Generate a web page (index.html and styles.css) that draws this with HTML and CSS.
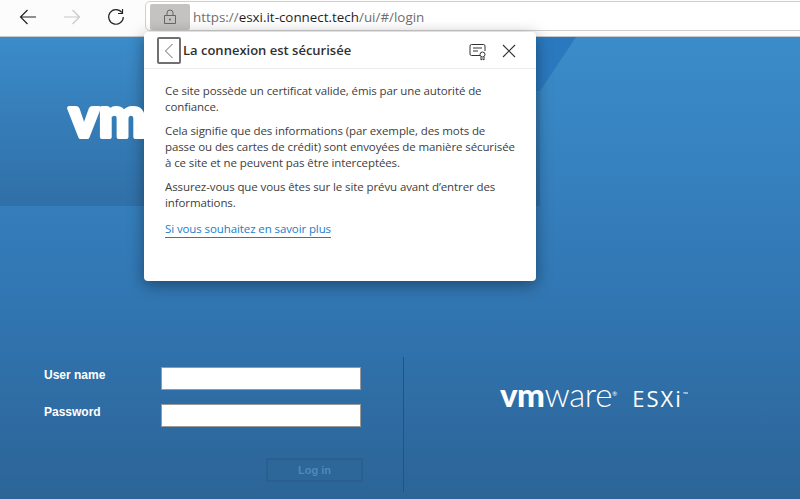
FILE: index.html
```html
<!DOCTYPE html>
<html lang="fr">
<head>
    <meta charset="UTF-8">
    <meta name="viewport" content="width=device-width, initial-scale=1.0">
    <title>VMware ESXi</title>
    <link rel="stylesheet" href="styles.css">
</head>
<body>
    <header class="toolbar">
        <nav class="nav-buttons">
            <svg class="nav-icon" width="20" height="20" viewBox="0 0 20 20"><path d="M18 10H2.500M9.500 3L2.500 10L9.500 17" fill="none" stroke="#222" stroke-width="1.200"/></svg>
            <svg class="nav-icon" width="20" height="20" viewBox="0 0 20 20"><path d="M2 10h15.500M10.500 3l7 7l-7 7" fill="none" stroke="#c8c8c8" stroke-width="1.200"/></svg>
            <svg class="nav-icon" width="20" height="20" viewBox="0 0 20 20"><path d="M15.800 5.500A7.300 7.300 0 1 0 17.300 10M16.500 2v4.500H12" fill="none" stroke="#222" stroke-width="1.200"/></svg>
        </nav>
        <div class="address-bar">
            <button class="lock-button">
                <svg width="14" height="16" viewBox="0 0 14 16"><path d="M1.500 6.500h11v8h-11zM4 6.500V4a3 3 0 0 1 6 0v2.500" fill="none" stroke="#666" stroke-width="1"/><circle cx="7" cy="10.500" r="1" fill="#666"/></svg>
            </button>
            <span class="url"><span class="url-dim">https://</span>esxi.it-connect.tech<span class="url-dim">/ui/#/login</span></span>
        </div>
    </header>

    <main class="login-page">
        <div class="hero">
            <svg class="hero-logo" width="220" height="48" viewBox="0 0 220 48"><text x="4" y="39">vm</text></svg>
        </div>

        <section class="login-row">
            <form class="login-form">
                <div class="field">
                    <label class="field-label">User name</label>
                    <input class="field-input" type="text">
                </div>
                <div class="field">
                    <label class="field-label">Password</label>
                    <input class="field-input" type="password">
                </div>
                <button class="login-button" type="button">Log in</button>
            </form>
            <div class="brand">
                <span class="brand-vm">vm</span><span class="brand-ware">ware</span><span class="brand-reg">®</span>
                <span class="brand-esxi">ESXi</span><span class="brand-tm">™</span>
            </div>
        </section>
    </main>

    <aside class="security-popup">
        <div class="popup-header">
            <button class="popup-back">
                <svg width="12" height="18" viewBox="0 0 12 18"><path d="M9.500 2L2.500 9l7 7" fill="none" stroke="#666" stroke-width="1"/></svg>
            </button>
            <h2 class="popup-title">La connexion est sécurisée</h2>
            <svg class="popup-cert" width="18" height="18" viewBox="0 0 18 18"><path d="M11 12.500H2.500a1.500 1.500 0 0 1-1.500-1.500V3a1.500 1.500 0 0 1 1.500-1.500h12a1.500 1.500 0 0 1 1.500 1.500v5" fill="none" stroke="#333" stroke-width="1"/><path d="M4 5h9M4 8h5" stroke="#333" stroke-width="1"/><circle cx="13.500" cy="11.500" r="2.500" fill="#fff" stroke="#333" stroke-width="1"/><path d="M12 14v3l1.500-1l1.500 1v-3" fill="none" stroke="#333" stroke-width="1"/></svg>
            <svg class="popup-close" width="14" height="14" viewBox="0 0 14 14"><path d="M1 1l12 12M13 1L1 13" stroke="#333" stroke-width="1.100"/></svg>
        </div>
        <div class="popup-body">
            <p>Ce site possède un certificat valide, émis par une autorité de confiance.</p>
            <p>Cela signifie que des informations (par exemple, des mots de passe ou des cartes de crédit) sont envoyées de manière sécurisée à ce site et ne peuvent pas être interceptées.</p>
            <p>Assurez-vous que vous êtes sur le site prévu avant d’entrer des informations.</p>
            <a class="popup-link" href="#">Si vous souhaitez en savoir plus</a>
        </div>
    </aside>
</body>
</html>
```

FILE: styles.css
```css
body {
    font-family: "Open Sans", "Noto Sans", sans-serif;
    margin: 0;
    height: 499px;
    overflow: hidden;
    display: flex;
    flex-direction: column;
    background-color: #2c6497;
}

/* barre du navigateur */
.toolbar {
    height: 36px;
    flex-shrink: 0;
    display: flex;
    background-color: #fcfcfc;
    border-bottom: 1px solid #c9c9c9;
    box-sizing: content-box;
}
.nav-buttons {
    width: 145px;
    padding: 7px 0 0 18px;
    box-sizing: border-box;
    display: flex;
    gap: 24px;
    align-items: flex-start;
}
.address-bar {
    flex-grow: 1;
    height: 30px;
    margin: 1px -6px 0 0;
    padding: 2px 0 0 4px;
    box-sizing: border-box;
    display: flex;
    align-items: flex-start;
    background-color: #fff;
    border: 1px solid #cfcfcf;
    border-radius: 5px;
}
.lock-button {
    width: 40px;
    height: 26px;
    padding: 0;
    border: none;
    background-color: #c4c3c2;
    border-radius: 2px;
    display: flex;
    align-items: center;
    justify-content: center;
}
.url {
    margin-left: 3px;
    font-size: 13.4px;
    line-height: 26px;
    color: #1f1f1f;
}
.url-dim {
    color: #6f6f6f;
}

/* page de login */
.login-page {
    flex-grow: 1;
    position: relative;
    display: flex;
    flex-direction: column;
    justify-content: space-between;
    background: linear-gradient(#3b8cca, #3279b6 50%, #2c6497);
    overflow: hidden;
}
.login-page::before {
    content: "";
    position: absolute;
    top: 0;
    left: 0;
    width: 540px;
    height: 169px;
    background: linear-gradient(rgba(36, 70, 110, 0), rgba(36, 70, 110, 0.26));
}
.login-page::after {
    content: "";
    position: absolute;
    top: 0;
    left: 500px;
    width: 76px;
    height: 54px;
    background-color: #2a79bf;
    clip-path: polygon(0 0, 100% 0, 40px 100%, 0 100%);
}
.hero {
    position: relative;
    z-index: 1;
    padding: 61px 0 0 65px;
}
.hero-logo {
    display: block;
}
.hero-logo text {
    font-family: Lato, sans-serif;
    font-size: 56px;
    font-weight: 900;
    fill: #fff;
    stroke: #fff;
    stroke-width: 4;
    stroke-linejoin: round;
}
.login-row {
    position: relative;
    z-index: 1;
    display: flex;
    height: 135px;
    margin-bottom: 7px;
}
.login-form {
    width: 359px;
    box-sizing: content-box;
    padding: 10px 0 0 44px;
    border-right: 1px solid #1f5488;
    font-family: "Liberation Sans", Arial, sans-serif;
}
.field {
    display: flex;
    margin-bottom: 14px;
}
.field-label {
    width: 117px;
    font-size: 12px;
    font-weight: bold;
    line-height: 16px;
    color: #fff;
}
.field-input {
    width: 200px;
    height: 23px;
    padding: 0;
    box-sizing: border-box;
    border: 1px solid #9a9a9a;
    background-color: #fff;
}
.login-button {
    display: block;
    width: 97px;
    height: 24px;
    margin: 31px 0 0 222px;
    padding: 0;
    border: 2px solid #2a5f90;
    background-color: #2d6698;
    color: #5088ba;
    font-family: inherit;
    font-size: 11px;
    font-weight: bold;
}
.brand {
    margin: 22px 0 0 96px;
    display: flex;
    align-items: baseline;
    height: 30px;
    color: #fff;
    font-family: Lato, sans-serif;
    line-height: 30px;
}
.brand-vm {
    font-size: 33px;
    font-weight: 900;
    letter-spacing: -0.5px;
}
.brand-ware {
    font-size: 33px;
    font-weight: 300;
    letter-spacing: -0.3px;
}
.brand-reg {
    font-size: 6px;
    align-self: flex-start;
}
.brand-esxi {
    margin-left: 15px;
    font-family: "Open Sans", sans-serif;
    font-size: 22px;
    font-weight: 500;
    letter-spacing: 2px;
}
.brand-tm {
    font-size: 7px;
    align-self: flex-start;
}

/* popup de securite */
.security-popup {
    position: absolute;
    top: 32px;
    left: 144px;
    width: 392px;
    height: 249px;
    background-color: #fff;
    border-radius: 4px;
    box-shadow: 0 4px 16px rgba(0, 0, 0, 0.4);
    color: #404040;
}
.popup-header {
    height: 37px;
    padding: 5px 20px 0 13px;
    box-sizing: border-box;
    display: flex;
    align-items: flex-start;
    border-bottom: 1px solid #ececec;
}
.popup-back {
    width: 24px;
    height: 27px;
    padding: 0;
    border: 2px solid #707070;
    border-radius: 2px;
    background: none;
    display: flex;
    align-items: center;
    justify-content: center;
}
.popup-title {
    flex-grow: 1;
    margin: 0 0 0 2px;
    font-size: 13px;
    font-weight: 600;
    line-height: 27px;
    color: #303030;
}
.popup-cert {
    margin: 6px 15px 0 0;
}
.popup-close {
    margin-top: 7px;
}
.popup-body {
    padding: 14px 21px 0;
    font-size: 11.5px;
    letter-spacing: -0.1px;
    line-height: 16px;
}
.popup-body p {
    margin: 0 0 8px;
}
.popup-link {
    display: inline-block;
    margin-top: 2px;
    color: #1a7ec8;
    text-decoration: none;
    border-bottom: 1px solid #1a7ec8;
}
```
